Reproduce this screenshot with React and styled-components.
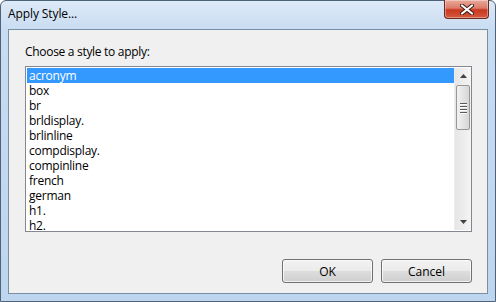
import React from 'react'
import styled, { createGlobalStyle } from 'styled-components'

const GlobalStyle = createGlobalStyle`
    html, body {
        margin: 0;
        padding: 0;
        background: #ffffff;
    }
    * {
        box-sizing: border-box;
    }
`

const DialogWindow = styled.div`
    width: 496px;
    height: 302px;
    display: flex;
    flex-direction: column;
    border: 1px solid #4f6378;
    border-radius: 6px 6px 0 0;
    background: linear-gradient(to bottom, #dde9f7 0px, #c8dcf2 30px, #bed5ef 100%);
    padding: 0 7px 7px 7px;
    font-family: "Open Sans", "Noto Sans", sans-serif;
    font-size: 12px;
    color: #000;
`

const TitleBar = styled.div`
    height: 28px;
    display: flex;
    align-items: flex-start;
    justify-content: space-between;
`

const Title = styled.span`
    padding-top: 4px;
    font-size: 12px;
    letter-spacing: -0.1px;
`

const CloseButton = styled.div`
    width: 45px;
    height: 19px;
    margin-top: -1px;
    margin-right: -1px;
    display: flex;
    align-items: center;
    justify-content: center;
    border: 1px solid #6b2a20;
    border-top: none;
    border-radius: 0 0 4px 4px;
    background: linear-gradient(to bottom, #e9a99b 0%, #dc7c68 45%, #c7381f 55%, #d65a3e 100%);
    box-shadow: inset 0 0 0 1px rgba(255, 255, 255, 0.35);
`

const ClientArea = styled.div`
    flex: 1;
    display: flex;
    flex-direction: column;
    border: 1px solid #7b8ea3;
    background: #f0f0f0;
    padding: 14px 15px 10px 16px;
`

const Prompt = styled.div`
    line-height: 16px;
    margin-bottom: 6px;
    letter-spacing: -0.3px;
`

const ListBox = styled.div`
    height: 166px;
    display: flex;
    border: 1px solid #828790;
    background: #fff;
    padding: 1px 0 1px 1px;
`

const Items = styled.div`
    flex: 1;
    overflow: hidden;
`

const Item = styled.div`
    height: 15px;
    line-height: 15px;
    padding-left: 2px;
    letter-spacing: -0.25px;
    overflow: hidden;
    background: ${p => (p.$selected ? '#3399ff' : 'transparent')};
    color: ${p => (p.$selected ? '#fff' : '#000')};
`

const ScrollBar = styled.div`
    width: 17px;
    display: flex;
    flex-direction: column;
    background: linear-gradient(to right, #e6e6e6, #f4f4f4);
    border-left: 1px solid #ececec;
`

const ArrowButton = styled.div`
    height: 16px;
    display: flex;
    align-items: center;
    justify-content: center;
`

const Track = styled.div`
    flex: 1;
    padding: 1px 0;
`

const Thumb = styled.div`
    height: 45px;
    margin: 0 1px;
    display: flex;
    flex-direction: column;
    align-items: center;
    justify-content: center;
    gap: 2px;
    border: 1px solid #979797;
    border-radius: 2px;
    background: linear-gradient(to right, #f2f2f2, #e4e4e4 50%, #d6d6d6);
`

const Grip = styled.span`
    width: 7px;
    height: 1px;
    background: #5a5a5a;
    box-shadow: 0 1px 0 #fff;
`

const ButtonRow = styled.div`
    display: flex;
    justify-content: flex-end;
    gap: 8px;
    margin-top: auto;
`

const PushButton = styled.button`
    width: 91px;
    height: 24px;
    font-family: inherit;
    font-size: 12px;
    color: #000;
    border: 1px solid #707070;
    border-radius: 3px;
    background: linear-gradient(to bottom, #f2f2f2 0%, #ebebeb 50%, #dddddd 51%, #cfcfcf 100%);
    box-shadow: inset 0 0 0 1px rgba(255, 255, 255, 0.7);
    padding: 0;
`

const styles = [
    'acronym',
    'box',
    'br',
    'brldisplay.',
    'brlinline',
    'compdisplay.',
    'compinline',
    'french',
    'german',
    'h1.',
    'h2.',
]

const Arrow = ({ up }) => (
    <svg width="7" height="4" viewBox="0 0 7 4">
        <path d={up ? 'M0 4 L3.5 0 L7 4 Z' : 'M0 0 L3.5 4 L7 0 Z'} fill="#404040" />
    </svg>
)

const CloseGlyph = () => (
    <svg width="14" height="11" viewBox="0 0 14 11">
        <path
            d="M2 1.5 L12 9.5 M12 1.5 L2 9.5"
            stroke="#3a1a14"
            strokeWidth="4"
            strokeLinecap="round"
        />
        <path d="M2 1.5 L12 9.5 M12 1.5 L2 9.5" stroke="#fff" strokeWidth="2.2" strokeLinecap="round" />
    </svg>
)

const App = () => {
    return (
        <>
            <GlobalStyle />
            <DialogWindow>
                <TitleBar>
                    <Title>Apply Style...</Title>
                    <CloseButton>
                        <CloseGlyph />
                    </CloseButton>
                </TitleBar>
                <ClientArea>
                    <Prompt>Choose a style to apply:</Prompt>
                    <ListBox>
                        <Items>
                            {styles.map((name, i) => (
                                <Item key={name} $selected={i === 0}>{name}</Item>
                            ))}
                        </Items>
                        <ScrollBar>
                            <ArrowButton><Arrow up /></ArrowButton>
                            <Track>
                                <Thumb>
                                    <Grip />
                                    <Grip />
                                    <Grip />
                                    <Grip />
                                </Thumb>
                            </Track>
                            <ArrowButton><Arrow /></ArrowButton>
                        </ScrollBar>
                    </ListBox>
                    <ButtonRow>
                        <PushButton>OK</PushButton>
                        <PushButton>Cancel</PushButton>
                    </ButtonRow>
                </ClientArea>
            </DialogWindow>
        </>
    )
}

export default App
